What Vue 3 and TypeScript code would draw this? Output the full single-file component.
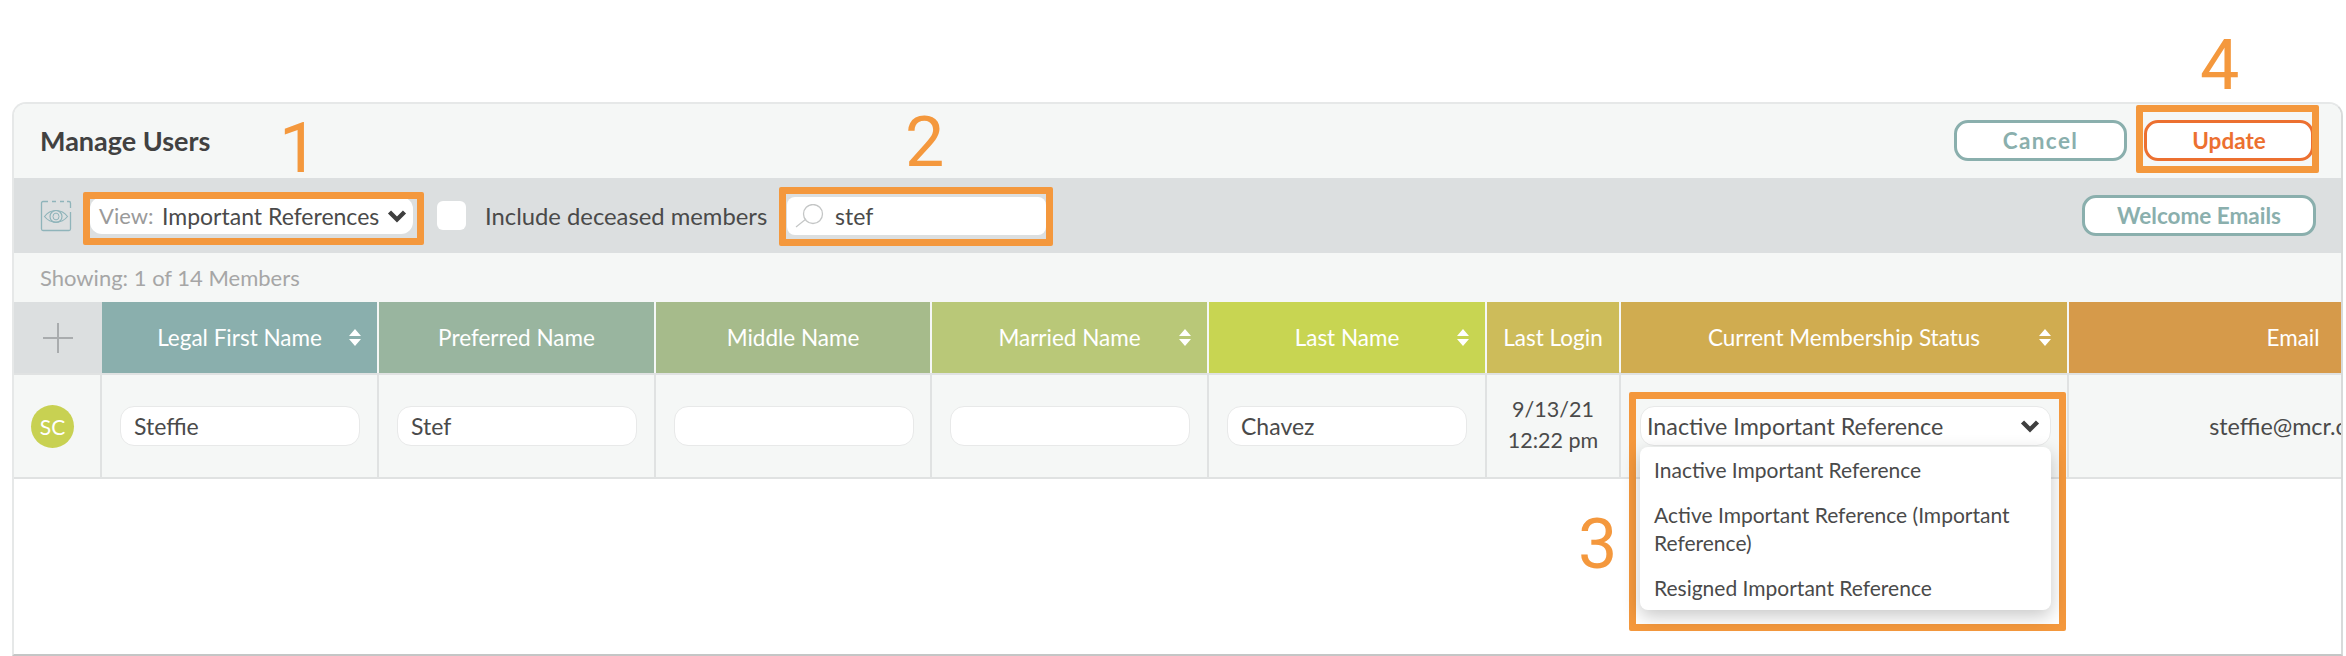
<script setup lang="ts">
import { ref } from 'vue';

interface Column {
    label: string;
    width: number;
    color: string;
    sortable?: boolean;
}

const columns: Column[] = [
    { label: 'Legal First Name', width: 277, color: '#8aafad', sortable: true },
    { label: 'Preferred Name', width: 277, color: '#99b59f' },
    { label: 'Middle Name', width: 276, color: '#a6bb8b' },
    { label: 'Married Name', width: 277, color: '#b9c878', sortable: true },
    { label: 'Last Name', width: 278, color: '#c8d552', sortable: true },
    { label: 'Last Login', width: 134, color: '#cdbc5a' },
    { label: 'Current Membership Status', width: 448, color: '#d0ac50', sortable: true },
    { label: 'Email', width: 450, color: '#d69a4a' },
];

const nameFields = ref(['Steffie', 'Stef', '', '', 'Chavez']);
const statusOptions = [
    'Inactive Important Reference',
    'Active Important Reference (Important Reference)',
    'Resigned Important Reference',
];
</script>

<template>
    <div class="page">
        <section class="panel">
            <header class="title-bar">
                <h1>Manage Users</h1>
                <div class="actions">
                    <button class="btn cancel" type="button">Cancel</button>
                    <button class="btn update" type="button">Update</button>
                </div>
            </header>

            <div class="toolbar">
                <svg class="eye" width="32" height="32" viewBox="0 0 32 32" fill="none" stroke="#8fb4ba">
                    <path d="M8 1.5H3A1.5 1.5 0 0 0 1.5 3v26A1.5 1.5 0 0 0 3 30.5h26a1.5 1.5 0 0 0 1.5-1.5V12" stroke-width="1.3" />
                    <path d="M12 1.5h4M20 1.5h4M27 1.5h2A1.5 1.5 0 0 1 30.5 3v5" stroke-width="1.3" />
                    <path d="M4.5 16.5c6-8 17-8 23 0-6 7.5-17 7.5-23 0z" stroke-width="1.2" />
                    <ellipse cx="16" cy="16.5" rx="6" ry="6" stroke-width="1.2" />
                    <ellipse cx="16" cy="16.5" rx="3" ry="3.4" stroke-width="1" />
                </svg>
                <div class="view-select">
                    <span class="view-label">View:</span>
                    <span class="view-value">Important References</span>
                    <svg class="chevron" width="20" height="14" viewBox="0 0 20 14">
                        <path d="M2.5 3 10 10.5 17.5 3" fill="none" stroke="#3f3f3f" stroke-width="4.4" />
                    </svg>
                </div>
                <span class="checkbox"></span>
                <span class="check-label">Include deceased members</span>
                <div class="search">
                    <svg width="30" height="24" viewBox="0 0 30 24" fill="none" stroke="#c4c6c6" stroke-width="1.3">
                        <circle cx="18" cy="10" r="9.5" />
                        <path d="M1 23 11 15" />
                    </svg>
                    <span>stef</span>
                </div>
                <button class="btn welcome" type="button">Welcome Emails</button>
            </div>

            <div class="showing">Showing: 1 of 14 Members</div>

            <div class="table">
                <div class="head-row">
                    <div class="add-cell">
                        <svg width="32" height="32" viewBox="0 0 32 32" stroke="#a9acae" stroke-width="2">
                            <path d="M16 1v30M1 16h30" />
                        </svg>
                    </div>
                    <div v-for="col in columns" :key="col.label" class="head-cell"
                        :style="{ width: col.width + 'px', background: col.color }">
                        <span>{{ col.label }}</span>
                        <svg v-if="col.sortable" class="sort" width="12" height="17" viewBox="0 0 12 17" fill="#fff">
                            <path d="M6 0l6 7H0zM0 10h12l-6 7z" />
                        </svg>
                    </div>
                </div>

                <div class="body-row">
                    <div class="avatar-cell"><span class="avatar">SC</span></div>
                    <div v-for="(value, i) in nameFields" :key="i" class="cell"
                        :style="{ width: columns[i].width + 'px' }">
                        <input class="field" type="text" v-model="nameFields[i]" />
                    </div>
                    <div class="cell login" :style="{ width: columns[5].width + 'px' }">
                        <span>9/13/21</span>
                        <span>12:22 pm</span>
                    </div>
                    <div class="cell status" :style="{ width: columns[6].width + 'px' }">
                        <div class="status-select">
                            <span>Inactive Important Reference</span>
                            <svg class="chevron" width="20" height="14" viewBox="0 0 20 14">
                                <path d="M2.5 3 10 10.5 17.5 3" fill="none" stroke="#3f3f3f" stroke-width="4.4" />
                            </svg>
                        </div>
                        <ul class="status-menu">
                            <li v-for="option in statusOptions" :key="option">{{ option }}</li>
                        </ul>
                    </div>
                    <div class="cell email" :style="{ width: columns[7].width + 'px' }">steffie@mcr.com</div>
                </div>
            </div>
        </section>

        <!-- orange callouts drawn over the screenshot -->
        <div class="callout box-1"></div>
        <div class="callout box-2"></div>
        <div class="callout box-3"></div>
        <div class="callout box-4"></div>
        <span class="num num-1">1</span>
        <span class="num num-2">2</span>
        <span class="num num-3">3</span>
        <span class="num num-4">4</span>
    </div>
</template>

<style scoped>
.page {
    position: relative;
    width: 2346px;
    height: 656px;
    box-sizing: border-box;
    padding: 102px 3px 0 12px;
    overflow: hidden;
    background: #fff;
    font-family: Lato, "Open Sans", sans-serif;
    color: #4a4a4a;
}

.panel {
    height: 554px;
    box-sizing: border-box;
    background: #fff;
    border: 2px solid #e6e8e8;
    border-bottom-color: #c4c6c6;
    border-right-color: #d8dada;
    border-radius: 14px 14px 0 0;
    overflow: hidden;
}

.title-bar {
    display: flex;
    align-items: center;
    justify-content: space-between;
    height: 74px;
    padding: 0 27px 0 26px;
    background: #f5f7f6;
}

.title-bar h1 {
    margin: -2px 0 0;
    font-size: 27px;
    font-weight: 700;
    color: #414141;
}

.actions {
    display: flex;
    gap: 17px;
    margin-top: -2px;
}

.btn {
    height: 41px;
    box-sizing: border-box;
    border: 3px solid #8aafad;
    border-radius: 14px;
    background: #fff;
    color: #8aafad;
    font-family: inherit;
    font-size: 22.5px;
    font-weight: 700;
    padding: 0;
}

.cancel {
    width: 173px;
    letter-spacing: 1.4px;
}

.update {
    width: 170px;
    border-color: #ec7030;
    color: #ec7030;
}

.welcome {
    width: 234px;
    margin-left: auto;
}

.toolbar {
    display: flex;
    align-items: center;
    height: 75px;
    padding: 0 25px 0 26px;
    background: #dcdfe0;
}

.eye {
    flex: none;
}

.view-select {
    display: flex;
    align-items: center;
    width: 323px;
    height: 37px;
    box-sizing: border-box;
    margin-left: 18px;
    padding-left: 9px;
    background: #fff;
    border-radius: 12px;
    font-size: 23px;
}

.view-label {
    color: #9a9a9a;
    width: 63px;
    font-size: 22px;
}

.view-value {
    width: 225px;
    white-space: nowrap;
}

.checkbox {
    width: 29px;
    height: 29px;
    margin-left: 24px;
    background: #fff;
    border-radius: 6px;
}

.check-label {
    width: 302px;
    margin-left: 19px;
    font-size: 23.8px;
    white-space: nowrap;
}

.search {
    display: flex;
    align-items: center;
    gap: 10px;
    width: 259px;
    height: 38px;
    box-sizing: border-box;
    padding-left: 8px;
    background: #fff;
    border-radius: 8px;
    font-size: 23px;
}

.showing {
    height: 49px;
    line-height: 49px;
    padding-left: 26px;
    background: #f5f7f6;
    color: #a6a6a6;
    font-size: 22px;
}

.table {
    width: 2520px;
}

.head-row,
.body-row {
    display: flex;
}

.add-cell {
    display: flex;
    align-items: center;
    justify-content: center;
    width: 88px;
    height: 71px;
    background: #dcdfe0;
}

.head-cell {
    display: flex;
    align-items: center;
    justify-content: center;
    position: relative;
    height: 71px;
    box-sizing: border-box;
    border-right: 2px solid #f5f7f6;
    color: #fff;
    font-size: 22.5px;
    white-space: nowrap;
}

.sort {
    position: absolute;
    right: 16px;
    top: 27px;
}

.body-row {
    height: 106px;
    box-sizing: border-box;
    background: #f5f7f6;
    border-top: 2px solid #e0e2e2;
    border-bottom: 2px solid #e0e2e2;
}

.avatar-cell {
    display: flex;
    align-items: center;
    width: 88px;
    box-sizing: border-box;
    padding-left: 17px;
    border-right: 2px solid #e0e2e2;
}

.avatar {
    display: flex;
    align-items: center;
    justify-content: center;
    width: 43px;
    height: 43px;
    border-radius: 50%;
    background: #c8d152;
    color: #fff;
    font-size: 21px;
}

.cell {
    display: flex;
    align-items: center;
    position: relative;
    box-sizing: border-box;
    padding-left: 18px;
    border-right: 2px solid #e0e2e2;
    font-size: 23.3px;
}

.field {
    width: 240px;
    height: 40px;
    box-sizing: border-box;
    padding: 0 13px;
    border: 1.5px solid #e8e9e9;
    border-radius: 14px;
    background: #fff;
    color: #4a4a4a;
    font-family: inherit;
    font-size: 23px;
    outline: none;
}

.login {
    flex-direction: column;
    justify-content: center;
    gap: 6px;
    padding-left: 0;
    font-size: 21.5px;
    line-height: 25px;
    margin-top: -3px;
    height: 105px;
}

.status {
    padding-left: 19px;
}

.status-select {
    display: flex;
    align-items: center;
    justify-content: space-between;
    width: 411px;
    height: 40px;
    box-sizing: border-box;
    padding: 0 10px 0 6px;
    background: #fff;
    border: 1.5px solid #e8e9e9;
    border-radius: 14px;
    white-space: nowrap;
}

.status-menu {
    position: absolute;
    left: 19px;
    top: 72px;
    width: 411px;
    height: 163px;
    box-sizing: border-box;
    margin: 0;
    padding: 9px 20px 0 14px;
    list-style: none;
    background: #fff;
    border-radius: 8px;
    box-shadow: 0 6px 18px rgba(0, 0, 0, 0.22);
    font-size: 21px;
    line-height: 28px;
    z-index: 2;
}

.status-menu li {
    padding: 0 0 17px;
}

.email {
    justify-content: center;
    padding-left: 0;
    border-right: 0;
}

.callout {
    position: absolute;
    box-sizing: border-box;
    border: 7px solid #f4983d;
    border-radius: 2px;
}

.box-1 {
    left: 83px;
    top: 192px;
    width: 341px;
    height: 53px;
}

.box-2 {
    left: 779px;
    top: 187px;
    width: 274px;
    height: 59px;
}

.box-3 {
    left: 1629px;
    top: 392px;
    width: 437px;
    height: 239px;
}

.box-4 {
    left: 2136px;
    top: 105px;
    width: 183px;
    height: 68px;
}

.num {
    position: absolute;
    color: #f4983d;
    font-family: Roboto, sans-serif;
    font-size: 70px;
    line-height: 70px;
}

.num-1 {
    left: 279px;
    top: 113px;
}

.num-2 {
    left: 905px;
    top: 107px;
}

.num-3 {
    left: 1578px;
    top: 509px;
}

.num-4 {
    left: 2200px;
    top: 30px;
}
</style>

<style>
body {
    background: #fff;
}
</style>
